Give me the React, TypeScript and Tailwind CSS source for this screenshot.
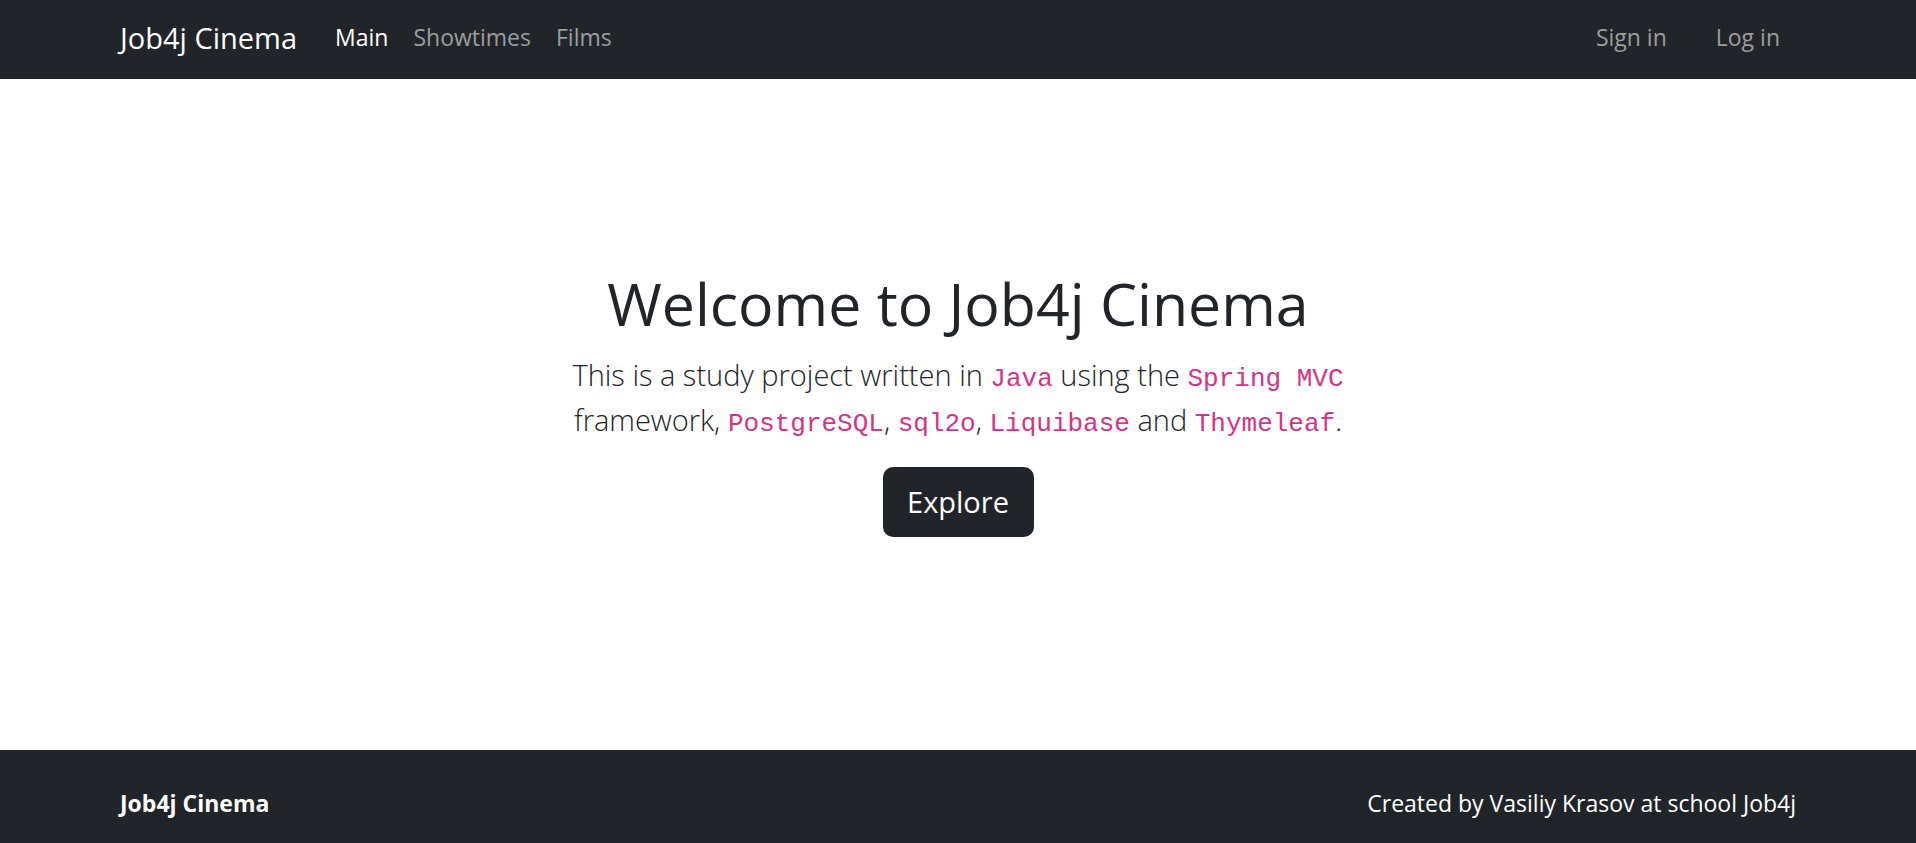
export default function App() {
  const code = "font-['Liberation_Mono',monospace] text-[26px] leading-none text-[#d63384] font-normal";
  return (
    <div className="flex min-h-screen flex-col bg-white font-['Open_Sans',sans-serif] text-[#212529]">
      <nav className="flex h-[79px] items-center bg-[#212529] px-[120px] pb-[5px]">
        <a href="#" className="mr-[38px] text-[29px] leading-none text-white">
          Job4j Cinema
        </a>
        <ul className="flex items-center gap-[25px] text-[23px]">
          <li>
            <a href="#" className="text-white">
              Main
            </a>
          </li>
          <li>
            <a href="#" className="text-[#9b9d9f]">
              Showtimes
            </a>
          </li>
          <li>
            <a href="#" className="text-[#9b9d9f]">
              Films
            </a>
          </li>
        </ul>
        <div className="ml-auto flex items-center gap-[49px] pr-4 text-[23px] text-[#9b9d9f]">
          <a href="#">Sign in</a>
          <a href="#">Log in</a>
        </div>
      </nav>

      <main className="flex flex-1 flex-col items-center pt-[189px] text-center">
        <h1 className="text-[59px] leading-[1.2] font-normal">Welcome to Job4j Cinema</h1>
        <p className="mt-[13px] text-[29px] leading-[45px] font-light">
          This is a study project written in <code className={code}>Java</code> using the{" "}
          <code className={code}>Spring MVC</code>
          <br />
          framework, <code className={code}>PostgreSQL</code>, <code className={code}>sql2o</code>,{" "}
          <code className={code}>Liquibase</code> and <code className={code}>Thymeleaf</code>.
        </p>
        <button className="mt-[25px] h-[70px] w-[151px] rounded-[10px] bg-[#212529] text-[29px] text-white">
          Explore
        </button>
      </main>

      <footer className="flex h-[93px] items-center justify-between bg-[#212529] px-[120px] pt-[14px] text-[23px] text-white">
        <span className="font-bold">Job4j Cinema</span>
        <span>Created by Vasiliy Krasov at school Job4j</span>
      </footer>
    </div>
  );
}
